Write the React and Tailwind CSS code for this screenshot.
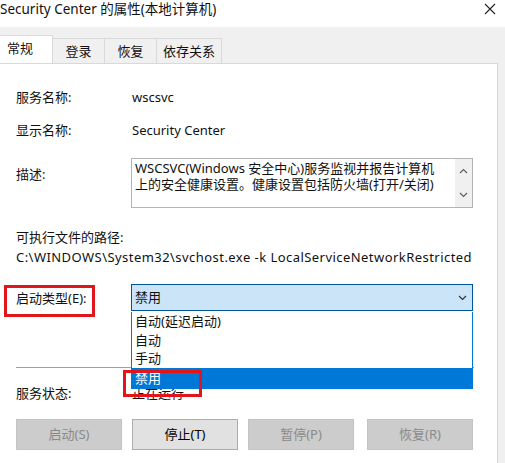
import React from "react";

const font = { fontFamily: '"Noto Sans", "Noto Sans CJK SC", sans-serif' };

const Chevron = ({ up = false, className = "" }) => (
  <svg width="9" height="6" viewBox="0 0 9 6" className={className}>
    <polyline
      points={up ? "1,5 4.5,1.5 8,5" : "1,1 4.5,4.5 8,1"}
      fill="none"
      stroke="currentColor"
      strokeWidth="1.2"
    />
  </svg>
);

const Button = ({ label, enabled }) => (
  <div
    className={
      "w-[106px] h-[31px] flex items-center justify-center border text-[13px] " +
      (enabled
        ? "bg-[#e1e1e1] border-[#adadad] text-black"
        : "bg-[#cccccc] border-[#c4c4c4] text-[#8a8a8a]")
    }
  >
    {label}
  </div>
);

export default function App() {
  const tabs = [
    { name: "常规", w: "w-[53px]" },
    { name: "登录", w: "w-[52px]" },
    { name: "恢复", w: "w-[52px]" },
    { name: "依存关系", w: "w-[65px]" },
  ];

  return (
    <div
      className="relative w-[505px] h-[463px] overflow-hidden bg-[#f0f0f0] text-[13px] text-[#111]"
      style={font}
    >
      {/* title bar */}
      <div className="h-[27px] bg-white flex items-start justify-between">
        <div className="text-[13.5px] leading-[16px] mt-[1px] whitespace-nowrap">
          Security Center 的属性(本地计算机)
        </div>
        <svg width="12" height="12" viewBox="0 0 12 12" className="mt-[3px] mr-[9px] text-[#222]">
          <path d="M1 1 L11 11 M11 1 L1 11" stroke="currentColor" strokeWidth="1.1" />
        </svg>
      </div>

      {/* tabs */}
      <div className="h-[36px] flex items-end">
        {tabs.map((t, i) =>
          i === 0 ? (
            <div
              key={t.name}
              className={t.w + " h-[28px] bg-white border-t border-r border-[#d9d9d9] flex items-center pl-[7px] pb-[2px]"}
            >
              {t.name}
            </div>
          ) : (
            <div
              key={t.name}
              className={t.w + " h-[25px] bg-[#f0f0f0] border-t border-r border-[#d9d9d9] flex items-center justify-center pt-[1px]"}
            >
              {t.name}
            </div>
          )
        )}
      </div>

      {/* panel */}
      <div className="flex h-[400px]">
        <div className="w-[498px] bg-white border-r border-[#d9d9d9] border-t border-t-[#d9d9d9] pl-[16px]">
          <div className="mt-[23px] flex leading-[20px]">
            <div className="w-[116px]">服务名称:</div>
            <div>wscsvc</div>
          </div>
          <div className="mt-[13px] flex leading-[20px]">
            <div className="w-[116px]">显示名称:</div>
            <div>Security Center</div>
          </div>
          <div className="mt-[18px] flex">
            <div className="w-[115px] pt-[6px] leading-[20px]">描述:</div>
            <div className="w-[342px] h-[50px] border border-[#b4b4b4] flex">
              <div className="flex-1 pl-[3px] pt-[1px] leading-[16px] text-[13px] whitespace-nowrap overflow-hidden">
                <div>WSCSVC(Windows 安全中心)服务监视并报告计算机</div>
                <div>上的安全健康设置。健康设置包括防火墙(打开/关闭)</div>
              </div>
              <div className="w-[17px] bg-[#f0f0f0] flex flex-col items-center justify-between py-[9px] text-[#606060]">
                <Chevron up />
                <Chevron />
              </div>
            </div>
          </div>
          <div className="mt-[19px] leading-[20px]">可执行文件的路径:</div>
          <div className="leading-[20px] w-[457px] whitespace-nowrap overflow-hidden tracking-[0.45px]">
            C:\WINDOWS\System32\svchost.exe -k LocalServiceNetworkRestricted -p
          </div>
          <div className="mt-[17px] flex items-center">
            <div className="w-[115px] leading-[20px]">启动类型(E):</div>
            <div className="w-[342px] h-[27px] bg-[#cce4f7] border border-[#005499] flex items-center justify-between pl-[3px] pr-[5px]">
              <span>禁用</span>
              <Chevron className="text-[#333]" />
            </div>
          </div>
          <div className="mt-[56px] w-[458px] h-px bg-[#a0a0a0]" />
          <div className="mt-[15px] flex leading-[20px]">
            <div className="w-[116px]">服务状态:</div>
            <div>正在运行</div>
          </div>
          <div className="mt-[16px] flex gap-[10px]">
            <Button label="启动(S)" />
            <Button label="停止(T)" enabled />
            <Button label="暂停(P)" />
            <div className="ml-[3px]">
              <Button label="恢复(R)" />
            </div>
          </div>
        </div>
      </div>

      {/* dropdown list over content */}
      <div className="absolute left-[131px] top-[312px] w-[342px] bg-white border border-t-0 border-[#0078d7] text-[13px]">
        <div className="h-[19px] leading-[19px] pl-[3px]">自动(延迟启动)</div>
        <div className="h-[18px] leading-[18px] pl-[3px]">自动</div>
        <div className="h-[19px] leading-[19px] pl-[3px]">手动</div>
        <div className="h-[20px] leading-[20px] pl-[3px] bg-[#0078d7] text-white">禁用</div>
      </div>

      {/* red highlight boxes */}
      <div className="absolute left-[4px] top-[285px] w-[91px] h-[32px] border-[3px] border-[#e0161b]" />
      <div className="absolute left-[123px] top-[370px] w-[79px] h-[27px] border-[3px] border-[#e0161b]" />
    </div>
  );
}
